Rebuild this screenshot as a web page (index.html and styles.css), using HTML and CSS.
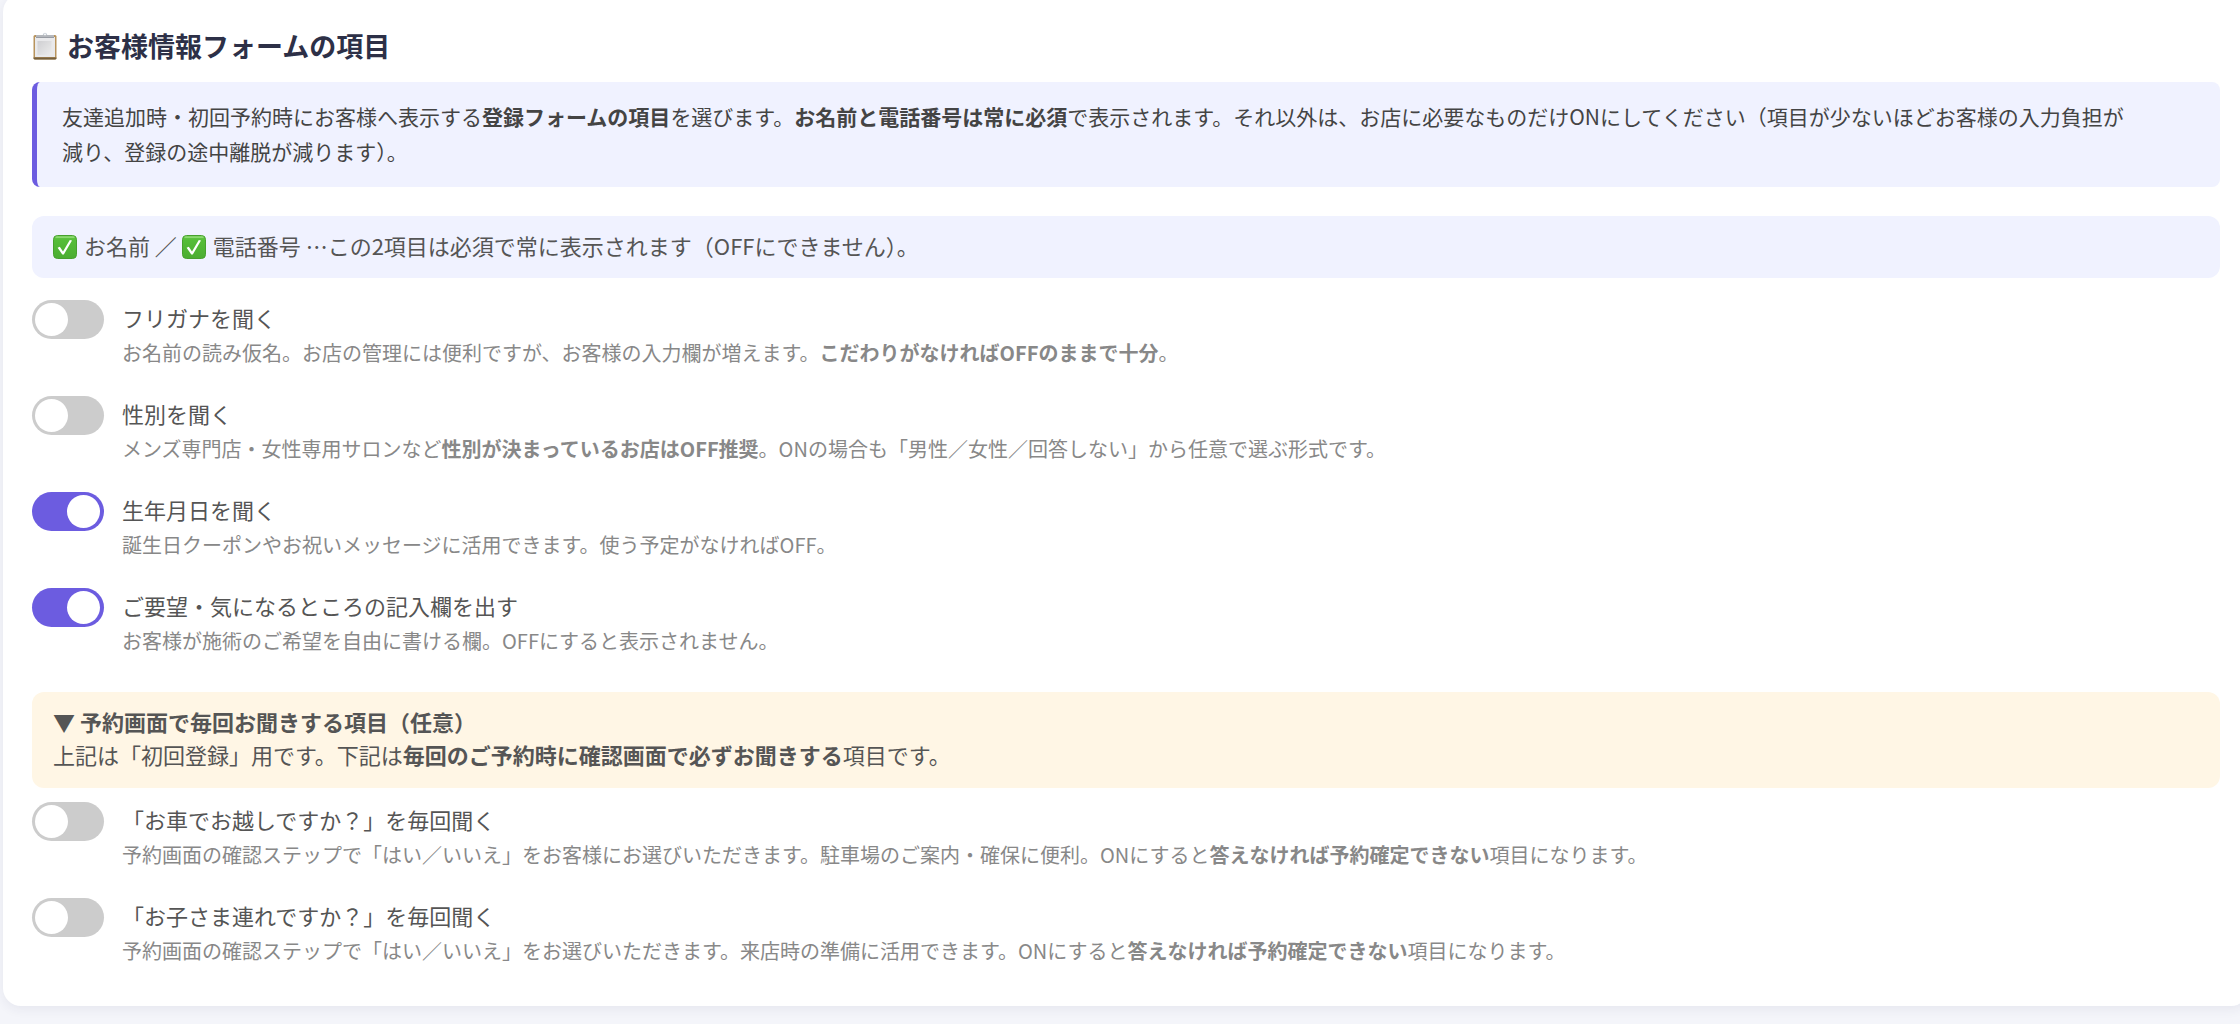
FILE: index.html
```html
<!DOCTYPE html>
<html lang="ja">
<head>
<meta charset="utf-8">
<meta name="viewport" content="width=device-width, initial-scale=1">
<title>お客様情報フォームの項目</title>
<link rel="stylesheet" href="styles.css">
</head>
<body>
<svg class="defs" aria-hidden="true">
  <defs>
    <linearGradient id="green" x1="0" y1="0" x2="0" y2="1">
      <stop offset="0" stop-color="#6bcb4c"/><stop offset="0.2" stop-color="#55bd38"/><stop offset="1" stop-color="#4bad32"/>
    </linearGradient>
    <linearGradient id="paper" x1="0" y1="0" x2="1" y2="1">
      <stop offset="0" stop-color="#cfcfd2"/><stop offset="1" stop-color="#ececec"/>
    </linearGradient>
    <symbol id="check" viewBox="0 0 24 24">
      <rect x="0.5" y="0.5" width="23" height="23" rx="4" fill="url(#green)" stroke="#47a02e"/>
      <path d="M3 2.2H21" stroke="#9ade80" stroke-width="1.2" stroke-linecap="round"/>
      <path d="M4.600 12.800L6.800 11.700L10 16.400L16.800 5L19 5.400L10.800 19.400H9.300Z" fill="#fff"/>
    </symbol>
  </defs>
</svg>
<main class="card">
  <h1 class="title">
    <svg class="emoji clipboard" viewBox="0 0 24 28" aria-hidden="true">
      <rect x="0.500" y="3" width="23" height="24.500" rx="1.500" fill="#b8935c"/>
      <path d="M0.500 25.500H23.500V26.500Q23 27.500 22 27.500H2Q1 27.500 0.500 26.500Z" fill="#75603f"/>
      <rect x="2" y="5" width="20" height="20" fill="#e9e9eb"/>
      <rect x="4.500" y="9" width="14" height="14" fill="url(#paper)"/>
      <path d="M9.500 3.500Q10 0.800 12 0.800T14.500 3.500Z" fill="#c5ccd4"/>
      <rect x="3" y="3" width="18" height="2.600" fill="#b4b7bc"/>
      <path d="M3 5.500H21" stroke="#8b9098" stroke-width="0.8"/>
      <circle cx="12" cy="2.400" r="0.900" fill="#fff"/>
    </svg>
    <span>お客様情報フォームの項目</span>
  </h1>
  <p class="intro">友達追加時・初回予約時にお客様へ表示する<b>登録フォームの項目</b>を選びます。<b>お名前と電話番号は常に必須</b>で表示されます。それ以外は、お店に必要なものだけONにしてください（項目が少ないほどお客様の入力負担が減り、登録の途中離脱が減ります）。</p>
  <p class="notice required"><svg class="emoji" aria-hidden="true"><use href="#check"/></svg> お名前 ／ <svg class="emoji" aria-hidden="true"><use href="#check"/></svg> 電話番号 …この2項目は必須で常に表示されます（OFFにできません）。</p>

  <div class="options">
    <div class="option">
      <input class="toggle" type="checkbox" id="kana" aria-describedby="kana-hint">
      <div class="text">
        <label for="kana">フリガナを聞く</label>
        <p class="hint" id="kana-hint">お名前の読み仮名。お店の管理には便利ですが、お客様の入力欄が増えます。<b>こだわりがなければOFFのままで十分</b>。</p>
      </div>
    </div>
    <div class="option">
      <input class="toggle" type="checkbox" id="gender" aria-describedby="gender-hint">
      <div class="text">
        <label for="gender">性別を聞く</label>
        <p class="hint" id="gender-hint">メンズ専門店・女性専用サロンなど<b>性別が決まっているお店はOFF推奨</b>。ONの場合も「男性／女性／回答しない」から任意で選ぶ形式です。</p>
      </div>
    </div>
    <div class="option">
      <input class="toggle" type="checkbox" id="birthday" aria-describedby="birthday-hint" checked>
      <div class="text">
        <label for="birthday">生年月日を聞く</label>
        <p class="hint" id="birthday-hint">誕生日クーポンやお祝いメッセージに活用できます。使う予定がなければOFF。</p>
      </div>
    </div>
    <div class="option">
      <input class="toggle" type="checkbox" id="request" aria-describedby="request-hint" checked>
      <div class="text">
        <label for="request">ご要望・気になるところの記入欄を出す</label>
        <p class="hint" id="request-hint">お客様が施術のご希望を自由に書ける欄。OFFにすると表示されません。</p>
      </div>
    </div>
  </div>

  <div class="notice every-time">
    <h2>▼ 予約画面で毎回お聞きする項目（任意）</h2>
    <p>上記は「初回登録」用です。下記は<b>毎回のご予約時に確認画面で必ずお聞きする</b>項目です。</p>
  </div>

  <div class="options">
    <div class="option">
      <input class="toggle" type="checkbox" id="car" aria-describedby="car-hint">
      <div class="text">
        <label for="car">「お車でお越しですか？」を毎回聞く</label>
        <p class="hint" id="car-hint">予約画面の確認ステップで「はい／いいえ」をお客様にお選びいただきます。駐車場のご案内・確保に便利。ONにすると<b>答えなければ予約確定できない</b>項目になります。</p>
      </div>
    </div>
    <div class="option">
      <input class="toggle" type="checkbox" id="child" aria-describedby="child-hint">
      <div class="text">
        <label for="child">「お子さま連れですか？」を毎回聞く</label>
        <p class="hint" id="child-hint">予約画面の確認ステップで「はい／いいえ」をお選びいただきます。来店時の準備に活用できます。ONにすると<b>答えなければ予約確定できない</b>項目になります。</p>
      </div>
    </div>
  </div>
</main>
</body>
</html>
```
FILE: styles.css
```css
* {
  box-sizing: border-box;
}

html {
  overflow: hidden auto;
}

body {
  margin: 0;
  display: flow-root;
  background: #f4f5fa;
  color: #555;
  font-family: "Noto Sans CJK JP", sans-serif;
  font-size: 22px;
  line-height: 32px;
}

h1,
h2,
p {
  margin: 0;
}

.defs {
  position: absolute;
  width: 0;
  height: 0;
}

.card {
  margin: -6px -9px 20px 3px;
  padding: 31px 29px 4px;
  border-radius: 18px;
  background: #fff;
  box-shadow: 0 3px 12px rgba(40, 40, 80, 0.07);
}

.title {
  display: flex;
  align-items: center;
  gap: 10px;
  margin-bottom: 15px;
  padding-left: 1px;
  color: #2d3047;
  font-size: 27px;
  line-height: 42px;
}

.emoji {
  width: 24px;
  height: 24px;
  margin-right: 2px;
  vertical-align: -4px;
}

.clipboard {
  height: 28px;
  margin-right: 0;
}

.intro {
  margin-bottom: 29px;
  padding: 17px 80px 18px 25px;
  border-left: 5px solid #6c5ce0;
  border-radius: 8px;
  background: #f0f2ff;
  color: #444;
  font-size: 21px;
  line-height: 35px;
}

.notice {
  padding: 13px 21px 17px;
  border-radius: 12px;
}

.required {
  margin-bottom: 22px;
  background: #f0f2ff;
}

.every-time {
  margin-bottom: 14px;
  background: #fff6e5;
  line-height: 33px;
}

.every-time h2 {
  font-size: 22px;
}

.option {
  display: flex;
  align-items: flex-start;
  gap: 18px;
  min-height: 96px;
}

.options {
  padding-bottom: 8px;
}

.text {
  flex: 1;
}

.text label {
  display: block;
  line-height: 34px;
}

.hint {
  color: #888;
  font-size: 20px;
  line-height: 37px;
}

.toggle {
  appearance: none;
  flex: none;
  width: 72px;
  height: 39px;
  margin: 0;
  padding: 3px;
  border-radius: 20px;
  background: #ccc;
  cursor: pointer;
}

.toggle::before {
  content: "";
  display: block;
  width: 33px;
  height: 33px;
  border-radius: 50%;
  background: #fff;
}

.toggle:checked {
  background: #6c5ce0;
}

.toggle:checked::before {
  margin-left: 32px;
}
```
